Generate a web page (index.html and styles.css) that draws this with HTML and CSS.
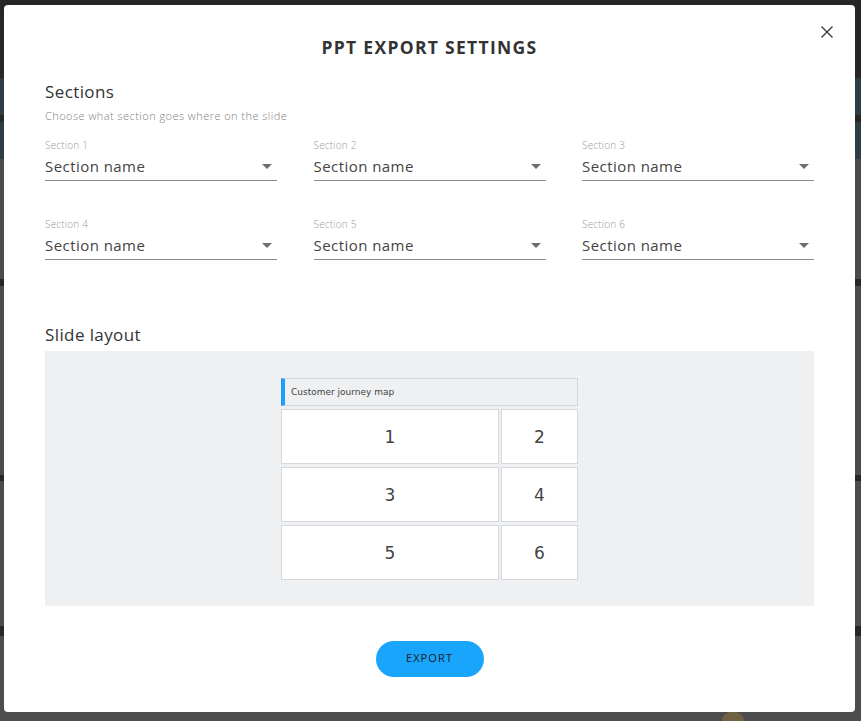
FILE: index.html
```html
<!DOCTYPE html>
<html lang="en">
<head>
  <meta charset="UTF-8">
  <meta name="viewport" content="width=device-width, initial-scale=1.0">
  <title>PPT Export Settings</title>
  <link rel="stylesheet" href="styles.css">
</head>
<body>
  <!-- Dimmed app behind the dialog -->
  <div class="backdrop">
    <div class="band band-top"></div>
    <div class="band band-nav"></div>
    <div class="band band-line"></div>
    <div class="band band-nav"></div>
    <div class="band band-panel first"></div>
    <div class="band band-line"></div>
    <div class="band band-panel second"></div>
    <div class="band band-line thin"></div>
    <div class="band band-panel third"></div>
    <div class="band band-line wide"></div>
    <div class="band band-panel last"></div>
    <span class="avatar"></span>
  </div>

  <!-- Export dialog -->
  <div class="modal">
    <button class="modal-close" aria-label="Close">
      <svg width="12" height="12" viewBox="0 0 12 12"><path d="M0.5 0.5 L11.5 11.5 M11.5 0.5 L0.5 11.5" stroke="#3c3c3c" stroke-width="1.4" fill="none"/></svg>
    </button>
    <h1 class="modal-title">PPT EXPORT SETTINGS</h1>

    <h2 class="block-title">Sections</h2>
    <p class="block-hint">Choose what section goes where on the slide</p>

    <div class="section-grid">
      <div class="field">
        <label class="field-label">Section 1</label>
        <div class="select"><span>Section name</span><i class="caret"></i></div>
      </div>
      <div class="field">
        <label class="field-label">Section 2</label>
        <div class="select"><span>Section name</span><i class="caret"></i></div>
      </div>
      <div class="field">
        <label class="field-label">Section 3</label>
        <div class="select"><span>Section name</span><i class="caret"></i></div>
      </div>
      <div class="field">
        <label class="field-label">Section 4</label>
        <div class="select"><span>Section name</span><i class="caret"></i></div>
      </div>
      <div class="field">
        <label class="field-label">Section 5</label>
        <div class="select"><span>Section name</span><i class="caret"></i></div>
      </div>
      <div class="field">
        <label class="field-label">Section 6</label>
        <div class="select"><span>Section name</span><i class="caret"></i></div>
      </div>
    </div>

    <h2 class="block-title layout-title">Slide layout</h2>
    <div class="layout-box">
      <div class="slide">
        <div class="slide-header">Customer journey map</div>
        <div class="slide-grid">
          <div class="slot">1</div>
          <div class="slot">2</div>
          <div class="slot">3</div>
          <div class="slot">4</div>
          <div class="slot">5</div>
          <div class="slot">6</div>
        </div>
      </div>
    </div>

    <div class="actions">
      <button class="btn-export">EXPORT</button>
    </div>
  </div>
</body>
</html>
```

FILE: styles.css
```css
html, body { margin: 0; height: 100%; overflow: hidden; }
body { background-color: #4c4c4c; font-family: "Open Sans", Arial, sans-serif; }

/* background app, already dimmed */
.backdrop { position: relative; height: 100%; overflow: hidden; }
.band-top { height: 78px; background-color: #262626; }
.band-nav { height: 37px; background-color: #2e3c43; }
.band-line { height: 7px; background-color: #272727; }
.band-line.thin { height: 6px; }
.band-line.wide { height: 10px; }
.band-panel { background-color: #4a4b4a; }
.band-panel.first { height: 120px; }
.band-panel.second { height: 189px; background-color: #4b4b4b; }
.band-panel.third { height: 145px; background-color: #4c4c4c; }
.band-panel.last { height: 86px; background-color: #4d4d4d; }
.avatar { position: absolute; left: 722px; top: 712px; width: 22px; height: 9px; border-radius: 11px 11px 0 0; background-color: #6f6243; }

/* dialog */
.modal { position: fixed; left: 4px; top: 5px; width: 851px; height: 707px; box-sizing: border-box; padding: 30px 41px 0; background-color: #fff; border-radius: 4px; color: #333; }
.modal-close { position: absolute; top: 20px; right: 21px; width: 14px; height: 14px; padding: 1px; border: none; background: none; cursor: pointer; line-height: 0; }
.modal-title { margin: 0; font-size: 17.5px; line-height: 24px; font-weight: 700; text-align: center; letter-spacing: 1.3px; color: #333; }

.block-title { margin: 22px 0 0; font-size: 17px; line-height: 22px; font-weight: 400; color: #333; letter-spacing: 0.4px; }
.block-hint { margin: 5px 0 0; font-size: 11px; line-height: 16px; font-weight: 300; color: #808080; letter-spacing: 0.45px; }

.section-grid { display: grid; grid-template-columns: repeat(3, 232px); column-gap: 36.5px; row-gap: 36px; margin-top: 14px; }
.field-label { display: block; font-size: 10px; line-height: 14px; font-weight: 300; color: #9a9a9a; letter-spacing: 0.2px; }
.select { display: flex; align-items: center; justify-content: space-between; margin-top: 4px; padding-bottom: 4px; border-bottom: 1px solid #8c8c8c; font-size: 15px; line-height: 20px; color: #444; letter-spacing: 0.45px; }
.caret { width: 0; height: 0; margin-right: 5px; border-left: 5px solid transparent; border-right: 5px solid transparent; border-top: 5px solid #6e6e6e; }

.layout-title { margin-top: 64px; }
.layout-box { margin-top: 5px; height: 255px; box-sizing: border-box; padding-top: 27px; background-color: #eff0f2; display: flex; justify-content: center; }

/* slide preview */
.slide { width: 297px; font-family: "DejaVu Sans", Verdana, sans-serif; color: #444; }
.slide-header { height: 28px; box-sizing: border-box; padding-left: 6px; border: 1px solid #d3d8dc; border-left: 4px solid #18a0fb; background-color: #eff0f2; font-size: 9px; line-height: 27px; color: #444; }
.slide-grid { display: grid; grid-template-columns: 218px 77px; column-gap: 2px; row-gap: 3px; margin-top: 3px; }
.slot { height: 55px; box-sizing: border-box; border: 1px solid #d5d9dd; background-color: #fff; display: flex; align-items: center; justify-content: center; font-size: 17px; color: #444; }

.actions { display: flex; justify-content: center; margin-top: 35px; }
.btn-export { width: 108px; height: 36px; padding: 0 0 3px; border: none; border-radius: 18px; background-color: #18a5fb; color: #1b1b1b; font-family: "Open Sans", Arial, sans-serif; font-size: 11px; letter-spacing: 1.1px; cursor: pointer; }
```
